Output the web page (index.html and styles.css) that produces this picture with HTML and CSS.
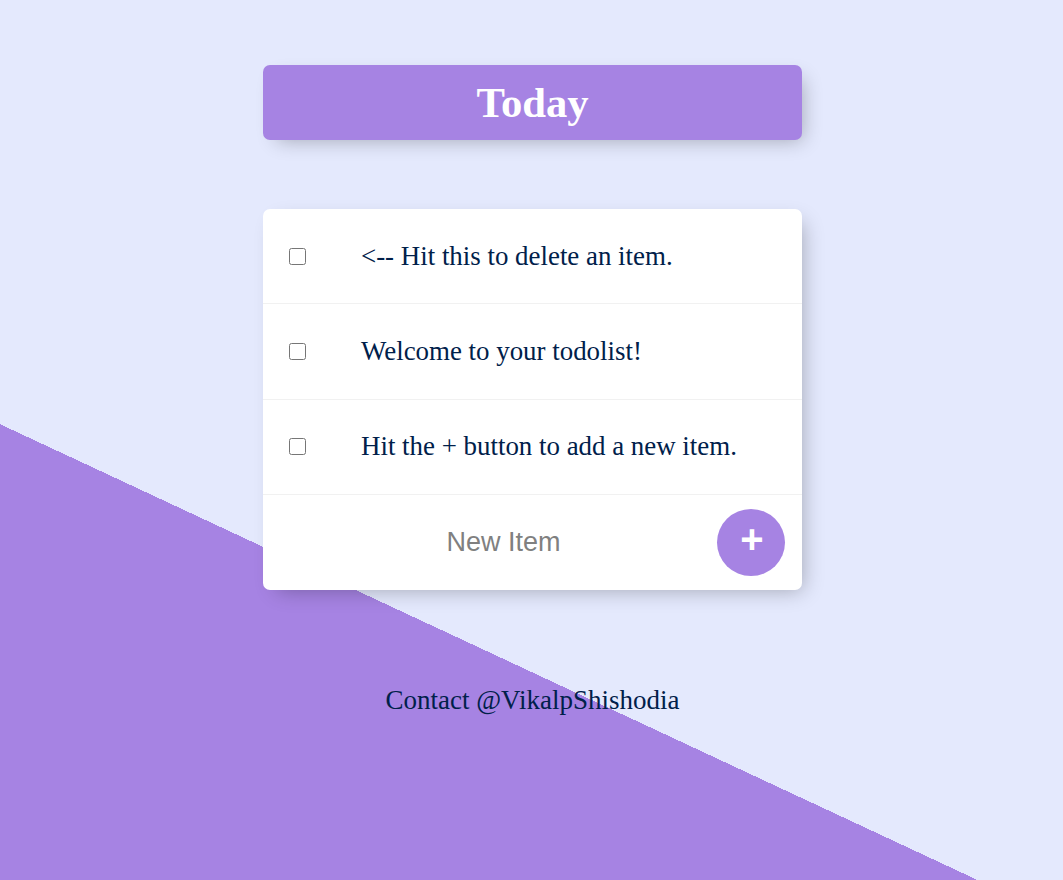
FILE: index.html
```html
<!DOCTYPE html>
<html lang="en">
<head>
<meta charset="utf-8">
<title>Todo List</title>
<link rel="stylesheet" href="styles.css">
</head>
<body>
  <main class="page">
    <div class="box heading">
      <h1>Today</h1>
    </div>
    <div class="box list">
      <div class="item">
        <input class="check" type="checkbox">
        <p class="item-text">&lt;-- Hit this to delete an item.</p>
      </div>
      <div class="item">
        <input class="check" type="checkbox">
        <p class="item-text">Welcome to your todolist!</p>
      </div>
      <div class="item">
        <input class="check" type="checkbox">
        <p class="item-text">Hit the + button to add a new item.</p>
      </div>
      <form class="form-row" onsubmit="return false;">
        <input class="new-item" type="text" name="newItem" placeholder="New Item" autocomplete="off">
        <button class="add-btn" type="submit">+</button>
      </form>
    </div>
    <footer class="footer">
      <p class="footer-text">Contact @VikalpShishodia</p>
    </footer>
  </main>
</body>
</html>
```

FILE: styles.css
```css
html {
  height: 100%;
  background: #E4E9FD linear-gradient(25deg, #A683E3 50%, #E4E9FD 50%) 0 0 / 1063px 1344px no-repeat;
  font-family: "Liberation Serif", "Times New Roman", serif;
}

body {
  margin: 0;
}

.page {
  padding-top: 65px;
  padding-left: 2px;
}

.box {
  width: 539px;
  margin: 0 auto;
  border-radius: 7px;
  box-shadow: 7px 7px 20px -7px rgba(0, 0, 0, 0.3);
  background: #fff;
}

.heading {
  height: 75px;
  background: #A683E3;
  display: flex;
  align-items: center;
  justify-content: center;
}

.heading h1 {
  margin: 0;
  font-size: 42.67px;
  font-weight: bold;
  color: #fff;
}

.list {
  margin-top: 69px;
}

.item {
  box-sizing: border-box;
  height: 95.33px;
  display: flex;
  align-items: center;
  border-bottom: 1px solid #F1F1F1;
}

.check {
  width: 17px;
  height: 17px;
  margin: 0 27px 0 26px;
  flex: none;
}

.item-text {
  margin: 0;
  padding-left: 28px;
  font-size: 26.9px;
  color: #00204a;
}

.form-row {
  box-sizing: border-box;
  height: 95.33px;
  display: flex;
  align-items: center;
  padding: 0 17px 0 27px;
  margin: 0;
}

.new-item {
  flex: 1;
  min-width: 0;
  height: 80px;
  border: none;
  outline: none;
  background: transparent;
  text-align: center;
  font-family: "Liberation Sans", Arial, sans-serif;
  font-size: 27px;
  color: #333;
  padding: 0;
}

.new-item::placeholder {
  color: grey;
  opacity: 1;
}

.add-btn {
  flex: none;
  width: 68px;
  height: 67px;
  border: none;
  border-radius: 50%;
  background: #A683E3;
  color: #fff;
  font-family: "Liberation Sans", Arial, sans-serif;
  font-size: 40px;
  font-weight: bold;
  line-height: 1;
  padding: 0 0 7px 2px;
}

.footer {
  padding-top: 95px;
  text-align: center;
}

.footer-text {
  margin: 0;
  font-size: 27px;
  line-height: 31px;
  color: #00204a;
}
```
